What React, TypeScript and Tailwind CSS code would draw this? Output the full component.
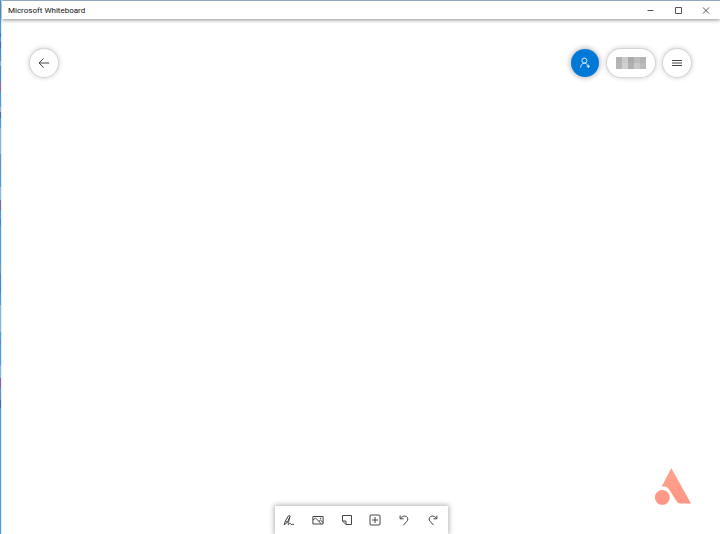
import type { ReactNode } from 'react';

// slice of the desktop wallpaper that shows left of the window
const EDGE = [
  { size: 33, color: '#4a9be0' },
  { size: 4, color: '#4478b4' },
  { size: 5, color: '#4a9be0' },
  { size: 6, color: '#3c70b0' },
  { size: 13, color: '#4a8cd0' },
  { size: 5, color: '#7fb2e4' },
  { size: 15, color: '#4a8cd0' },
  { size: 11, color: '#a06a9c' },
  { size: 15, color: '#459ee2' },
  { size: 5, color: '#8ab4dc' },
  { size: 6, color: '#4a6cac' },
  { size: 10, color: '#459ee2' },
  { size: 26, color: '#8cb4e2' },
  { size: 20, color: '#5c94d0' },
  { size: 13, color: '#459ee2' },
  { size: 13, color: '#8ab8e8' },
  { size: 10, color: '#8c649c' },
  { size: 9, color: '#459ee2' },
  { size: 6, color: '#4a80c4' },
  { size: 40, color: '#459ee2' },
  { size: 8, color: '#6ca0b0' },
  { size: 20, color: '#4a88cc' },
  { size: 12, color: '#459ee2' },
  { size: 27, color: '#8ab4e8' },
  { size: 9, color: '#459ee2' },
  { size: 3, color: '#5888b8' },
  { size: 21, color: '#459ee2' },
  { size: 13, color: '#8ab4e8' },
  { size: 10, color: '#94609c' },
  { size: 12, color: '#5c94d0' },
  { size: 8, color: '#3c70b4' },
  { size: 126, color: '#459ee2' },
];

const BLUR = [
  ['bg-[#b2b2b2]', 'bg-[#b6b6b6]'],
  ['bg-[#cbcbcb]', 'bg-[#d0d0d0]'],
  ['bg-[#aaaaaa]', 'bg-[#b0b0b0]'],
  ['bg-[#bcbcbc]', 'bg-[#c8c8c8]'],
  ['bg-[#b4b4b4]', 'bg-[#bababa]'],
];

interface IconProps {
  children: ReactNode;
  className?: string;
}

const Icon = ({ children, className = 'size-3' }: IconProps) => (
  <svg
    viewBox="0 0 12 12"
    className={className}
    fill="none"
    stroke="currentColor"
    strokeWidth={1}
    aria-hidden="true"
  >
    {children}
  </svg>
);

interface ButtonProps {
  label: string;
  className: string;
  children: ReactNode;
}

const IconButton = ({ label, className, children }: ButtonProps) => (
  <button
    type="button"
    aria-label={label}
    className={`flex items-center justify-center ${className}`}
  >
    {children}
  </button>
);

const ROUND = 'h-7 rounded-full bg-white text-[#444] ring-1 ring-[#d6d6d6] shadow-[0_0_5px_1px_rgba(0,0,0,0.2)]';

const TitleBar = () => (
  <header className="z-10 flex h-[19px] items-center justify-between border-t border-[#93a9c0] bg-white pr-2 pl-1.5 shadow-[0_1px_4px_rgba(0,0,0,0.45)]">
    <h1 className="pt-px text-[8px] leading-none text-[#111]">Microsoft Whiteboard</h1>
    <div className="flex gap-4 text-[#555]">
      <IconButton label="Minimize" className="size-3">
        <Icon>
          <path d="M3.5 6.5h6" />
        </Icon>
      </IconButton>
      <IconButton label="Maximize" className="size-3">
        <Icon>
          <path d="M3.5 3.5h6v6h-6z" />
        </Icon>
      </IconButton>
      <IconButton label="Close" className="size-3">
        <Icon>
          <path d="M3 3.5l6 6M9 3.5l-6 6" />
        </Icon>
      </IconButton>
    </div>
  </header>
);

const TopControls = () => (
  <div className="flex items-center justify-between pt-[30px] pr-[29px] pl-7">
    <IconButton label="Back" className={`w-7 ${ROUND}`}>
      <Icon>
        <path d="M11.2 6H1M5.6 1.4L1 6l4.6 4.6" />
      </Icon>
    </IconButton>
    <div className="flex items-center gap-2">
      <IconButton
        label="Invite someone"
        className="size-7 rounded-full bg-[#0078d7] text-white shadow-[0_0_4px_2px_rgba(0,0,0,0.2)]"
      >
        <Icon>
          <g strokeWidth={0.8}>
            <circle cx="5.4" cy="3.6" r="2.5" />
            <path d="M1.6 10.6c0-2.5 1.6-4.4 3.8-4.4 1.6 0 2.8 1 3.3 2.3M7.6 9.3h3.4M9.3 7.6V11" />
          </g>
        </Icon>
      </IconButton>
      <IconButton label="Account" className={`w-12 ${ROUND}`}>
        <span className="flex h-3">
          {BLUR.map(([top, bottom], i) => (
            <span key={i} className="flex w-1.5 flex-col">
              <span className={`flex-1 ${top}`} />
              <span className={`flex-1 ${bottom}`} />
            </span>
          ))}
        </span>
      </IconButton>
      <IconButton label="Settings" className={`w-7 ${ROUND}`}>
        <Icon>
          <path d="M1 3.5h10M1 6h10M1 8.5h10" />
        </Icon>
      </IconButton>
    </div>
  </div>
);

const TOOLS = [
  {
    label: 'Inking',
    icon: (
      <path d="M1.2 10.8l1.2-3.9L5.6 1.7c.6-.8 1.7-.2 1.3.8L4.4 8.3l-3.2 2.5M2.4 6.9l2 1.4M6.9 2.5L5.6 8.2c-.2 1.2-.8 2.4-.1 2.4s1-1.5 1.7-1.5.2 1.4 1 1.4 1.4-.2 2.8-.2" />
    ),
  },
  {
    label: 'Insert image',
    icon: (
      <>
        <path d="M.9 2.5h10.2v7.5H.9zM1 6l2.6-2 5.6 5.8M6.9 7.4l1.5-1.3L11 8.3" />
        <circle cx="8.7" cy="4.4" r=".4" />
      </>
    ),
  },
  {
    label: 'Note',
    icon: <path d="M1.5 1.5h9v9H5L1.5 7zM1.5 7H5v3.5" />,
  },
  {
    label: 'Insert',
    icon: (
      <>
        <rect x="1" y="1" width="10" height="10" rx="1" />
        <path d="M6 3v6M3 6h6" />
      </>
    ),
  },
  {
    label: 'Undo',
    icon: <path d="M2.1 1.6v3.2h3.5M2.3 4.6c1.5-2.2 4.3-3.3 6.3-1.9 1.7 1.3 1.5 3.2.3 4.6L5.4 11.2" />,
  },
  {
    label: 'Redo',
    icon: <path d="M9.9 1.6v3.2H6.4M9.7 4.6C8.2 2.4 5.4 1.3 3.4 2.7 1.7 4 1.9 5.9 3.1 7.3l3.5 3.9" />,
  },
];

const Toolbar = () => (
  <nav className="mx-auto flex h-7 w-full max-w-[173px] bg-white text-[#444] shadow-[0_0_5px_1px_rgba(0,0,0,0.3)]">
    {TOOLS.map(({ label, icon }) => (
      <IconButton key={label} label={label} className="flex-1">
        <Icon>{icon}</Icon>
      </IconButton>
    ))}
  </nav>
);

const Watermark = () => (
  <svg
    viewBox="0 0 38 38"
    className="absolute right-7 bottom-[29px] size-[38px]"
    fill="url(#mark)"
    aria-hidden="true"
  >
    <defs>
      <linearGradient id="mark" x1="0" y1="0" x2="0" y2="38" gradientUnits="userSpaceOnUse">
        <stop offset="0" stopColor="#ffa48c" />
        <stop offset="1" stopColor="#ff9585" />
      </linearGradient>
    </defs>
    <path d="M17.3 1L37 36.5h-9.2c-2.8 0-4.2-.8-5.7-3.1l-7-11c-1.4-2.2-3-3-7.4-3z" />
    <circle cx="8.3" cy="30.4" r="7.4" />
  </svg>
);

const App = () => {
  return (
    <div className="flex min-h-screen bg-white font-[Roboto,'Open_Sans',sans-serif]">
      <div className="flex w-px flex-col">
        {EDGE.map(({ size, color }, i) => (
          <div key={i} style={{ flexGrow: size, backgroundColor: color }} />
        ))}
      </div>
      <div className="flex flex-1 flex-col border-l border-[#e0effb]">
        <TitleBar />
        <main className="relative flex flex-1 flex-col justify-between overflow-hidden">
          <TopControls />
          <Watermark />
          <Toolbar />
        </main>
      </div>
    </div>
  );
};

export default App;
